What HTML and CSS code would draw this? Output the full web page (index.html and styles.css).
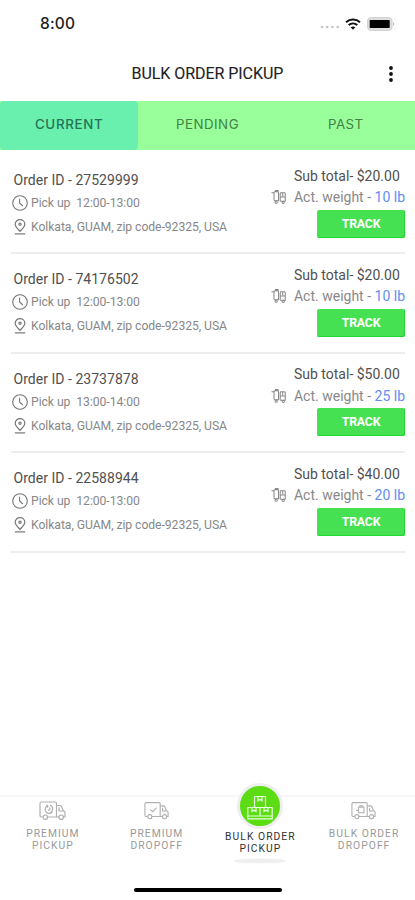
FILE: index.html
```html
<!DOCTYPE html>
<html lang="en">
<head>
<meta charset="utf-8">
<title>Bulk Order Pickup</title>
<link rel="stylesheet" href="styles.css">
</head>
<body>
<svg class="symbols" aria-hidden="true">
  <symbol id="clock" viewBox="0 0 16 16"><circle cx="8" cy="8" r="7.300"/><path d="M7.600 3.700V8l3.300 3"/></symbol>
  <symbol id="pin" viewBox="0 0 12 16"><path d="M6 12.400C3.800 9.900 1.200 7.700 1.200 5.200a4.800 4.500 0 0 1 9.600 0C10.800 7.700 8.200 9.900 6 12.400z"/><circle cx="6" cy="5.300" r="1.100"/><path d="M.8 14.900h10.400"/></symbol>
  <symbol id="cargo" viewBox="0 0 16 16"><path d="M.5 3.500h2.700v7.500q0 1 1 1h3.800V3.500q0-1-1-1H4.200q-1 0-1 1M4.800 2.500V1.200h2.700v1.300M9.800 12.500V4.500q0-1 1-1h3.400q1 0 1 1v8H9.800M10 8h5M12.500 3.500v3.800"/><circle cx="5.500" cy="13.500" r="1.200"/><circle cx="13" cy="13.700" r="1.200"/></symbol>
  <symbol id="truck" viewBox="0 0 27 20"><path d="M4 16.500H2.500q-1.500 0-1.500-1.500V3q0-1.500 1.500-1.500H16q1.500 0 1.500 1.500v13.500H8.500M17.500 5h3.500q1 0 1.500 1l1.700 4 1.800 1.500v5h-1.500M20 7v3.500h4M17.500 16.500h2.500"/><circle cx="6.300" cy="16.700" r="2.200"/><circle cx="22.200" cy="16.700" r="2.200"/></symbol>
</svg>
<main class="screen">
  <header class="status">
    <span class="time">8:00</span>
    <div class="indicators">
      <svg class="signal" viewBox="0 0 20 4"><circle cx="2" cy="2" r="1.300"/><circle cx="7.200" cy="2" r="1.300"/><circle cx="12.400" cy="2" r="1.300"/><circle cx="17.600" cy="2" r="1.300"/></svg>
      <svg class="wifi" viewBox="0 0 16 12"><path d="M1 4.200a10.500 10.500 0 0 1 14 0M3.700 7.100a6.500 6.500 0 0 1 8.600 0"/><path class="dot" d="M5.700 9.200Q8 7.600 10.300 9.200L8 11.700z"/></svg>
      <svg class="battery" viewBox="0 0 28 14"><rect class="shell" x=".5" y=".5" width="24.500" height="13" rx="3.500"/><rect x="2.700" y="3" width="20" height="8" rx=".7"/><path class="tip" d="M26 5q2.500 2 0 4z"/></svg>
    </div>
  </header>
  <div class="title"><h1>BULK ORDER PICKUP</h1>
    <svg class="more" viewBox="0 0 4 18"><circle cx="2" cy="3" r="1.900"/><circle cx="2" cy="9" r="1.900"/><circle cx="2" cy="15" r="1.900"/></svg>
  </div>
  <nav class="tabs"><span class="tab current">CURRENT</span><span class="tab">PENDING</span><span class="tab">PAST</span></nav>
  <section class="orders">
    <article class="order">
      <div class="details"><h2>Order ID - 27529999</h2><p class="pickup"><svg class="clock"><use href="#clock"/></svg><span>Pick up &nbsp;12:00-13:00</span></p><p class="address"><svg class="pin"><use href="#pin"/></svg><span>Kolkata, GUAM, zip code-92325, USA</span></p></div>
      <div class="summary"><p class="total">Sub total- $20.00</p><p class="weight"><svg class="cargo"><use href="#cargo"/></svg><span>Act. weight - <b>10 lb</b></span></p><button>TRACK</button></div>
    </article>
    <article class="order">
      <div class="details"><h2>Order ID - 74176502</h2><p class="pickup"><svg class="clock"><use href="#clock"/></svg><span>Pick up &nbsp;12:00-13:00</span></p><p class="address"><svg class="pin"><use href="#pin"/></svg><span>Kolkata, GUAM, zip code-92325, USA</span></p></div>
      <div class="summary"><p class="total">Sub total- $20.00</p><p class="weight"><svg class="cargo"><use href="#cargo"/></svg><span>Act. weight - <b>10 lb</b></span></p><button>TRACK</button></div>
    </article>
    <article class="order">
      <div class="details"><h2>Order ID - 23737878</h2><p class="pickup"><svg class="clock"><use href="#clock"/></svg><span>Pick up &nbsp;13:00-14:00</span></p><p class="address"><svg class="pin"><use href="#pin"/></svg><span>Kolkata, GUAM, zip code-92325, USA</span></p></div>
      <div class="summary"><p class="total">Sub total- $50.00</p><p class="weight"><svg class="cargo"><use href="#cargo"/></svg><span>Act. weight - <b>25 lb</b></span></p><button>TRACK</button></div>
    </article>
    <article class="order">
      <div class="details"><h2>Order ID - 22588944</h2><p class="pickup"><svg class="clock"><use href="#clock"/></svg><span>Pick up &nbsp;12:00-13:00</span></p><p class="address"><svg class="pin"><use href="#pin"/></svg><span>Kolkata, GUAM, zip code-92325, USA</span></p></div>
      <div class="summary"><p class="total">Sub total- $40.00</p><p class="weight"><svg class="cargo"><use href="#cargo"/></svg><span>Act. weight - <b>20 lb</b></span></p><button>TRACK</button></div>
    </article>
  </section>
  <nav class="bottom">
    <div class="item"><svg class="truck" viewBox="0 0 27 20"><use href="#truck"/><path d="M9 5.200a4 4 0 1 0 4.500 6M9 5.200l-1.500-1M9 5.200l-.5 2M11 4.800a3.500 3.500 0 0 1 2.300 5l-2.300 3M10.800 7v2l-1.500 1.200"/></svg><span>PREMIUM<br>PICKUP</span></div>
    <div class="item"><svg class="truck small" viewBox="0 0 27 20"><use href="#truck"/><path d="M7 9l2.300 2.300L13.500 7"/></svg><span>PREMIUM<br>DROPOFF</span></div>
    <div class="item active"><span class="badge"><svg viewBox="0 0 26 25"><path d="M7.500 12.500v-11h11v11M11 1.500v4.300l2-1.300 2 1.300V1.500M.8 23.800V12.500h24.400v11.300zM13 12.500v8.500M5 12.500v4l2-1.200 2 1.200v-4M17 12.500v4l2-1.200 2 1.200v-4M.8 21h24.400"/></svg></span><span>BULK ORDER<br>PICKUP</span><i class="shadow"></i></div>
    <div class="item"><svg class="truck small" viewBox="0 0 27 20"><use href="#truck"/><path d="M8 6.500h6v6H8zM9.500 6.500V5h3v1.500M5.500 10H8"/></svg><span>BULK ORDER<br>DROPOFF</span></div>
  </nav>
  <div class="home"></div>
</main>
</body>
</html>
```
FILE: styles.css
```css
* { box-sizing: border-box; }
body { margin: 0; background: #fff; font-family: Roboto, sans-serif; color: #505050; }
h1, h2, p { margin: 0; font-weight: 400; }
svg { display: block; fill: none; flex: none; }
.symbols { position: absolute; width: 0; height: 0; }
.screen { width: 415px; height: 900px; overflow: hidden; display: flex; flex-direction: column; }
.status { height: 47px; padding: 0 20px 0 40px; display: flex; align-items: center; justify-content: space-between; }
.time { font: 500 15.5px/20px Inter, sans-serif; letter-spacing: .2px; color: #222; }
.indicators { display: flex; align-items: center; }
.signal { width: 20px; height: 4px; margin: 7px 5px 0 0; fill: #c4c4c4; }
.wifi { width: 16px; height: 12px; margin-right: 6px; stroke: #111; stroke-width: 2; }
.wifi .dot { fill: #111; stroke: none; }
.battery { width: 28px; height: 14px; fill: #000; }
.battery .shell { fill: #ddd; stroke: #d2d2d2; }
.battery .tip { fill: #bbb; }
.title { height: 54px; display: grid; grid-template-columns: 131.500px 1fr 26px; align-items: center; }
.title h1 { grid-column: 2; font-size: 16px; letter-spacing: -.05px; line-height: 20px; color: #222; -webkit-text-stroke: .1px; white-space: nowrap; }
.more { width: 4px; height: 18px; fill: #111; }
.tabs { height: 49px; display: grid; grid-template-columns: repeat(3, 1fr); background: #99ff9b; }
.tab { display: flex; align-items: center; justify-content: center; padding-bottom: 3px; font: 400 13.300px/16px Inter, sans-serif; letter-spacing: .5px; color: #438246; }
.current { background: #69f0ae; color: #247456; font-weight: 500; border-radius: 4px; letter-spacing: .7px; }
.orders { padding: 5px 10px 0 11px; flex: none; }
.order { height: 99.400px; display: flex; justify-content: space-between; border-bottom: 2px solid #ededed; }
.details { padding: 16px 0 0 2px; }
.details h2 { font-size: 14px; line-height: 18px; letter-spacing: .03px; padding-left: .5px; }
.details p { display: flex; align-items: center; height: 24px; font-size: 12.200px; letter-spacing: -.06px; color: #888; white-space: nowrap; }
.pickup { margin-top: 2px; }
.clock { width: 16px; height: 16px; margin: 0 3.500px 0 -1.500px; stroke: #777; stroke-width: 1.100; }
.pin { width: 12px; height: 16px; margin: 0 5.500px 0 .5px; stroke: #777; stroke-width: 1.200; }
.summary { width: 136px; display: flex; flex-direction: column; align-items: flex-end; padding-top: 10.500px; }
.total { width: 111px; font-size: 14px; line-height: 20px; white-space: nowrap; }
.weight { height: 24px; display: flex; align-items: center; gap: 8px; font-size: 14px; color: #888; white-space: nowrap; padding-bottom: 1px; }
.weight b { font-weight: 400; color: #5f8ef5; }
.cargo { width: 15px; height: 16px; stroke: #888; stroke-width: 1.100; }
button { width: 88px; height: 28px; padding: 0; border: 0; border-radius: 2px; background: #45e152; color: #fff; font: 700 12.300px/28px Roboto, sans-serif; box-shadow: inset -1px -1px #20d832; letter-spacing: -.2px; }
.bottom { height: 92px; margin-top: auto; display: grid; grid-template-columns: repeat(4, 1fr); border-top: 2px solid #f6f6f6; }
.item { display: flex; flex-direction: column; align-items: center; padding: 3px 0 0 1px; font-size: 10.300px; line-height: 12px; letter-spacing: 1.050px; text-align: center; color: #999; white-space: nowrap; }
.item > span { padding-left: 1px; }
.truck { width: 27px; height: 21px; margin-bottom: 7px; stroke: #b0b0b0; stroke-width: 1.200; }
.small { width: 25px; }
.active { color: #333; padding-top: 0; }
.item .badge { width: 46px; height: 46px; padding: 0; margin-top: -14px; margin-bottom: 2px; border-radius: 50%; border: 3px solid #eee; background: #5bdc13; display: flex; align-items: center; justify-content: center; flex: none; }
.badge svg { width: 26px; height: 25px; margin-top: 2px; stroke: #e8ffe0; stroke-width: 1.200; }
.shadow { width: 52px; height: 4px; margin-top: 4px; border-radius: 50%; background: #eee; box-shadow: 0 0 2px #eee; }
.home { width: 148px; height: 4px; border-radius: 2px; background: #000; margin: 1px auto 8px; flex: none; }
```
